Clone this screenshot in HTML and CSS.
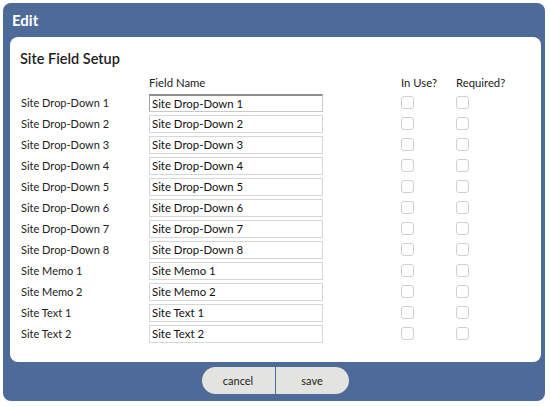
FILE: index.html
```html
<!DOCTYPE html>
<html>
<head>
<meta charset="utf-8">
<link rel="stylesheet" href="styles.css">
</head>
<body>
<div class="dialog">
  <div class="dialog-header">Edit</div>
  <div class="dialog-body">
    <h2 class="title">Site Field Setup</h2>
    <div class="grid">
      <div class="head"></div>
      <div class="head">Field Name</div>
      <div class="head">In Use?</div>
      <div class="head">Required?</div>

      <div class="label">Site Drop-Down 1</div>
      <div class="cell"><input class="field inset" type="text" value="Site Drop-Down 1"></div>
      <div class="cell"><span class="check"></span></div>
      <div class="cell"><span class="check"></span></div>

      <div class="label">Site Drop-Down 2</div>
      <div class="cell"><input class="field" type="text" value="Site Drop-Down 2"></div>
      <div class="cell"><span class="check"></span></div>
      <div class="cell"><span class="check"></span></div>

      <div class="label">Site Drop-Down 3</div>
      <div class="cell"><input class="field" type="text" value="Site Drop-Down 3"></div>
      <div class="cell"><span class="check"></span></div>
      <div class="cell"><span class="check"></span></div>

      <div class="label">Site Drop-Down 4</div>
      <div class="cell"><input class="field" type="text" value="Site Drop-Down 4"></div>
      <div class="cell"><span class="check"></span></div>
      <div class="cell"><span class="check"></span></div>

      <div class="label">Site Drop-Down 5</div>
      <div class="cell"><input class="field" type="text" value="Site Drop-Down 5"></div>
      <div class="cell"><span class="check"></span></div>
      <div class="cell"><span class="check"></span></div>

      <div class="label">Site Drop-Down 6</div>
      <div class="cell"><input class="field" type="text" value="Site Drop-Down 6"></div>
      <div class="cell"><span class="check"></span></div>
      <div class="cell"><span class="check"></span></div>

      <div class="label">Site Drop-Down 7</div>
      <div class="cell"><input class="field" type="text" value="Site Drop-Down 7"></div>
      <div class="cell"><span class="check"></span></div>
      <div class="cell"><span class="check"></span></div>

      <div class="label">Site Drop-Down 8</div>
      <div class="cell"><input class="field" type="text" value="Site Drop-Down 8"></div>
      <div class="cell"><span class="check"></span></div>
      <div class="cell"><span class="check"></span></div>

      <div class="label">Site Memo 1</div>
      <div class="cell"><input class="field" type="text" value="Site Memo 1"></div>
      <div class="cell"><span class="check"></span></div>
      <div class="cell"><span class="check"></span></div>

      <div class="label">Site Memo 2</div>
      <div class="cell"><input class="field" type="text" value="Site Memo 2"></div>
      <div class="cell"><span class="check"></span></div>
      <div class="cell"><span class="check"></span></div>

      <div class="label">Site Text 1</div>
      <div class="cell"><input class="field" type="text" value="Site Text 1"></div>
      <div class="cell"><span class="check"></span></div>
      <div class="cell"><span class="check"></span></div>

      <div class="label">Site Text 2</div>
      <div class="cell"><input class="field" type="text" value="Site Text 2"></div>
      <div class="cell"><span class="check"></span></div>
      <div class="cell"><span class="check"></span></div>
    </div>
  </div>
  <div class="dialog-footer">
    <div class="btn-group">
      <button class="btn btn-left">cancel</button>
      <button class="btn btn-right">save</button>
    </div>
  </div>
</div>
</body>
</html>
```
FILE: styles.css
```css
html, body {
  margin: 0;
  padding: 0;
  background: #ffffff;
}
body {
  font-family: Lato, "Open Sans", sans-serif;
  color: #222222;
}
.dialog {
  margin: 3px;
  width: 542px;
  height: 398px;
  background: #4e6a99;
  border-radius: 8px;
  display: flex;
  flex-direction: column;
}
.dialog-header {
  height: 34px;
  display: flex;
  align-items: center;
  padding-left: 9px;
  color: #ffffff;
  font-weight: bold;
  font-size: 15px;
}
.dialog-body {
  height: 325px;
  margin: 0 4px 0 7px;
  background: #ffffff;
  border-radius: 8px;
  padding: 12px 0 0 10px;
  box-sizing: border-box;
}
.title {
  margin: 0;
  font-size: 14.5px;
  line-height: 20px;
  font-weight: 600;
  color: #1e1e1e;
}
.grid {
  margin-top: 3px;
  padding-left: 1px;
  display: grid;
  grid-template-columns: 128px 252px 55px 60px;
  grid-template-rows: 20px repeat(12, 21px);
  font-size: 11px;
}
.head {
  display: flex;
  align-items: center;
  font-size: 11.3px;
  color: #222;
}
.label {
  display: flex;
  align-items: center;
  font-size: 11px;
}
.cell {
  display: flex;
  align-items: center;
}
.field {
  box-sizing: border-box;
  width: 174px;
  height: 18px;
  margin: 0;
  padding: 0 2px;
  border: 1px solid #d6d6d6;
  font-family: Lato, "Open Sans", sans-serif;
  font-size: 11.4px;
  color: #111;
  outline: none;
  background: #fff;
}
.field.inset {
  border-top: 2px solid #8e8e8e;
  border-left: 1px solid #a0a0a0;
  border-right: 1px solid #c8c8c8;
  border-bottom: 1px solid #c8c8c8;
}
.check {
  display: block;
  width: 11px;
  height: 11px;
  border: 1px solid #cfcfcf;
  border-radius: 3px;
  background: #fff;
}
.dialog-footer {
  flex: 1;
  display: flex;
  justify-content: center;
  padding-top: 5px;
  padding-left: 2px;
}
.btn-group {
  display: flex;
  gap: 1px;
  height: 27px;
}
.btn {
  width: 73px;
  height: 27px;
  border: none;
  background: #e3e3df;
  font-family: Lato, "Open Sans", sans-serif;
  font-size: 11px;
  color: #222;
  padding: 0;
}
.btn-left {
  border-radius: 14px 0 0 14px;
}
.btn-right {
  border-radius: 0 14px 14px 0;
}
```
